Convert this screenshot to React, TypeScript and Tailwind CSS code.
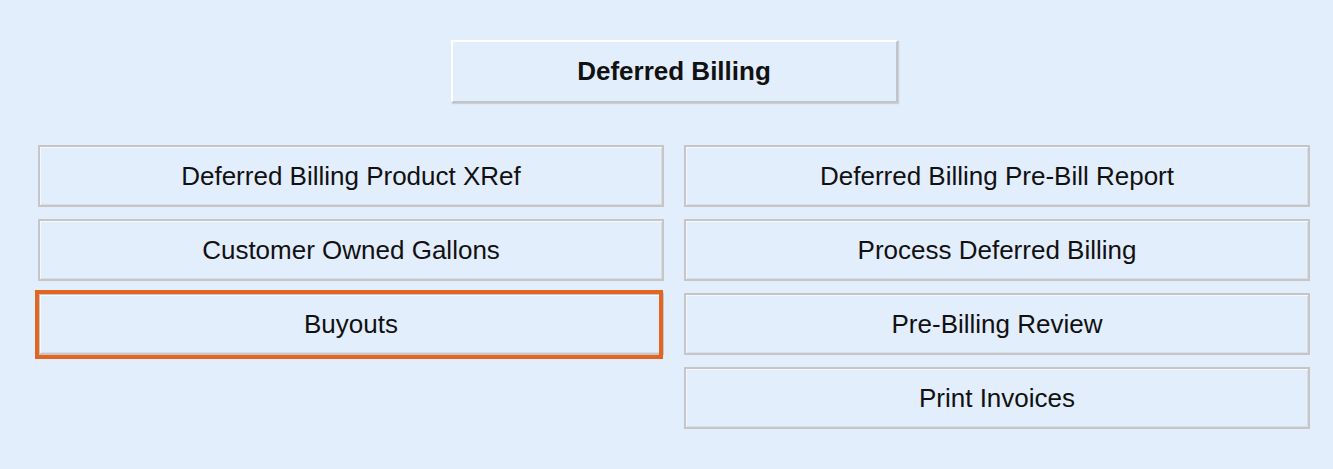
import React from "react";

const left = ["Deferred Billing Product XRef", "Customer Owned Gallons", "Buyouts"];
const right = [
  "Deferred Billing Pre-Bill Report",
  "Process Deferred Billing",
  "Pre-Billing Review",
  "Print Invoices",
];

function MenuButton({ label, focused }: { label: string; focused?: boolean }) {
  return (
    <div className="relative h-[62px]">
      <button className="flex h-full w-full items-center justify-center border-2 border-[#c6c6c6] bg-[#e3eefd] text-[26px] text-[#111] shadow-[inset_1px_1px_0_#f4f8ff,inset_-1px_-1px_0_#dadde2]">
        {label}
      </button>
      {focused && (
        <span className="pointer-events-none absolute -left-[3px] -top-[3px] right-[1px] -bottom-[4px] border-[4px] border-[#e06621]" />
      )}
    </div>
  );
}

export default function App() {
  return (
    <div
      className="min-h-screen h-[469px] bg-[#e3eefd] pl-[38px] pr-[23px] pt-[40px]"
      style={{ fontFamily: '"Liberation Sans", Arial, sans-serif' }}
    >
      <div className="mx-auto flex h-[63px] w-[447px] items-center justify-center border-2 border-t-white border-l-white border-r-[#c2c4c8] border-b-[#c2c4c8] bg-[#e3eefd] text-[26px] font-bold text-[#111] shadow-[1px_1px_1px_rgba(0,0,0,0.12)]">
        Deferred Billing
      </div>
      <div className="mt-[42px] grid grid-cols-2 gap-x-[20px]">
        <div className="flex flex-col gap-[12px]">
          {left.map((l) => (
            <MenuButton key={l} label={l} focused={l === "Buyouts"} />
          ))}
        </div>
        <div className="flex flex-col gap-[12px]">
          {right.map((l) => (
            <MenuButton key={l} label={l} />
          ))}
        </div>
      </div>
    </div>
  );
}
